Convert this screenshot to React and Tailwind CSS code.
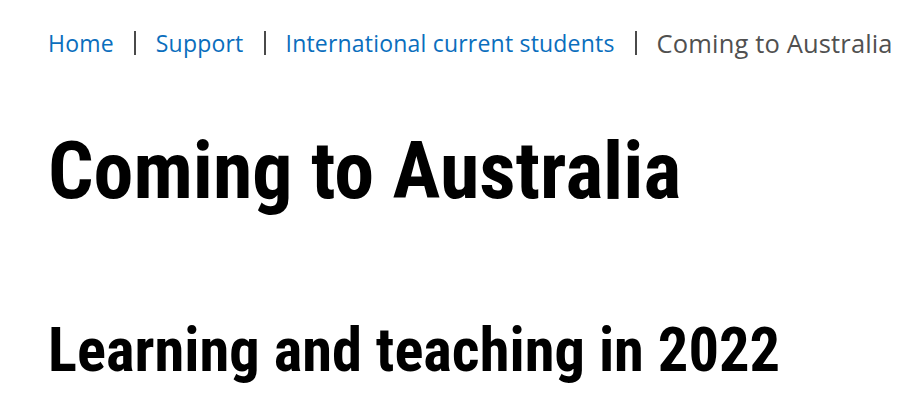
import React from 'react'

const crumbs = [
  { label: 'Home', href: '#' },
  { label: 'Support', href: '#' },
  { label: 'International current students', href: '#' },
]

export default function App() {
  return (
    <div className="min-h-screen bg-white pl-12 pt-[27px] font-['Open_Sans',Arial,sans-serif]">
      {/* Breadcrumb */}
      <nav className="flex items-center h-8 w-max whitespace-nowrap">
        {crumbs.map((c) => (
          <React.Fragment key={c.label}>
            <a href={c.href} className="text-[23px] tracking-[0.2px] text-[#0a6ebd]">{c.label}</a>
            <span className="shrink-0 mx-5 w-[2px] h-6 bg-[#4a4a4a]" />
          </React.Fragment>
        ))}
        <span className="text-[25.5px] tracking-[0.15px] text-[#505050]">Coming to Australia</span>
      </nav>

      <h1 className="mt-[72px] font-['Roboto',sans-serif] font-bold text-[80px] leading-none text-black font-stretch-condensed">
        Coming to Australia
      </h1>

      <h2 className="mt-[110px] font-['Roboto',sans-serif] font-bold text-[60.5px] leading-none text-black font-stretch-condensed">
        Learning and teaching in 2022
      </h2>
    </div>
  )
}
